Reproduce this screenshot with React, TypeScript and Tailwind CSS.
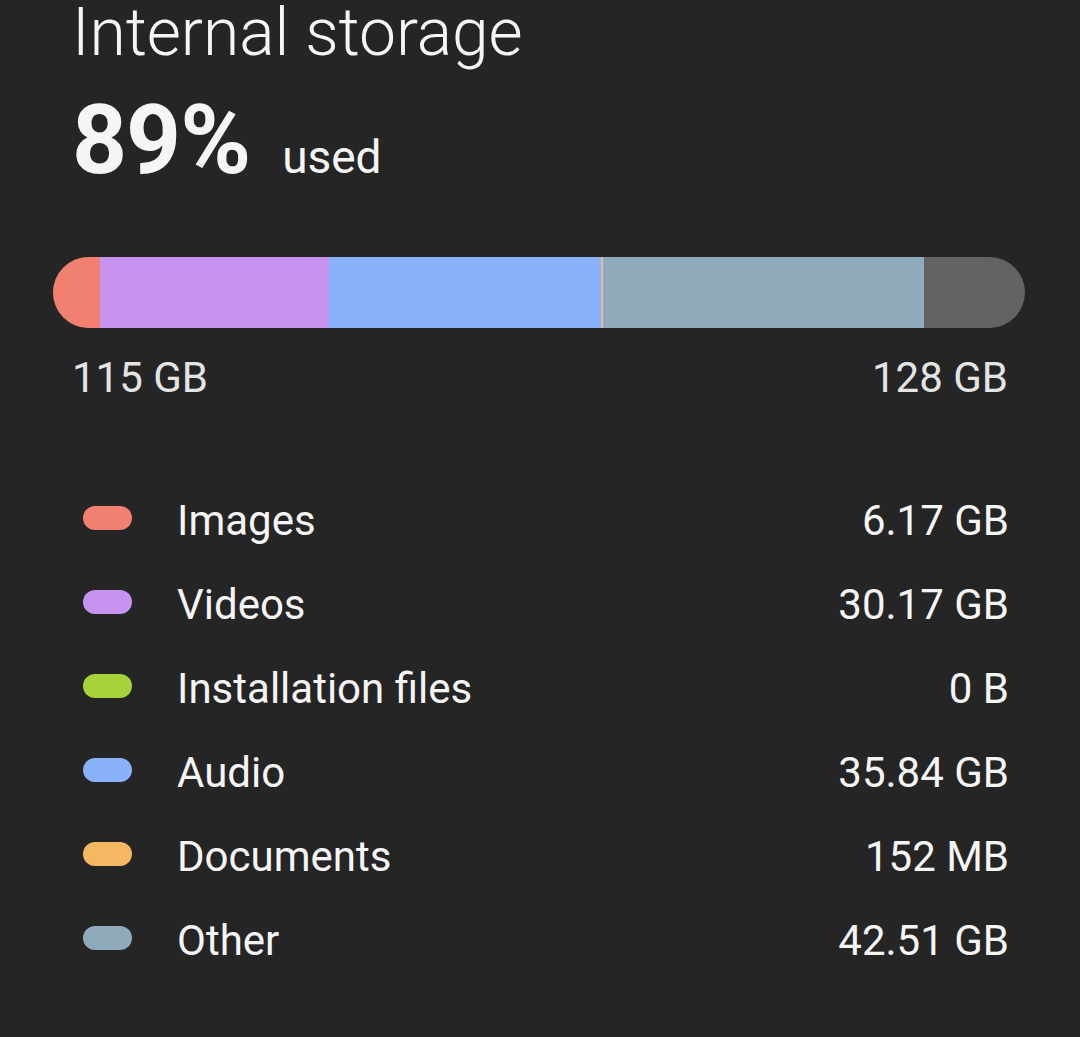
import React from 'react';

interface Segment {
  label: string;
  size: string;
  color: string;
  width: number; // px share of the bar
}

const categories: Segment[] = [
  { label: 'Images', size: '6.17 GB', color: 'bg-[#f28070]', width: 47 },
  { label: 'Videos', size: '30.17 GB', color: 'bg-[#c694f0]', width: 229 },
  { label: 'Installation files', size: '0 B', color: 'bg-[#a6d23a]', width: 0 },
  { label: 'Audio', size: '35.84 GB', color: 'bg-[#8ab2fa]', width: 272 },
  { label: 'Documents', size: '152 MB', color: 'bg-[#f5b862]', width: 1 },
  { label: 'Other', size: '42.51 GB', color: 'bg-[#8faabb]', width: 322 },
];

export default function App() {
  return (
    <div className="flow-root min-h-screen bg-[#252525] text-[#f5f5f5] font-['Roboto','Liberation_Sans',sans-serif]">
      <div className="pl-[53px] pr-[55px]">
        {/* Header */}
        <div className="pl-[19px]">
          <h1 className="pt-[1px] text-[66px] font-light leading-[64px] tracking-[-0.1px]">Internal storage</h1>
          <div className="mt-[27px] flex items-baseline gap-[32px]">
            <span className="text-[96px] font-bold leading-none tracking-[-1px]">89%</span>
            <span className="text-[46px] leading-none">used</span>
          </div>
        </div>

        {/* Usage bar */}
        <div className="mt-[69px] flex h-[71px] overflow-hidden rounded-full bg-[#636363]">
          {categories.map((c) =>
            c.width > 0 ? (
              <div
                key={c.label}
                className={`${c.color} h-full shrink-0 ${c.label === 'Other' ? 'border-l border-[#c9c9c9]' : ''}`}
                style={{ width: c.width }}
              />
            ) : null,
          )}
        </div>

        <div className="mt-[29px] flex justify-between pl-[19px] pr-[17px] text-[42px] leading-none text-[#e4e4e4]">
          <span>115 GB</span>
          <span>128 GB</span>
        </div>

        {/* Legend */}
        <div className="mt-[79px] pl-[30px] pr-[16px]">
          {categories.map((c) => (
            <div key={c.label} className="flex h-[84px] items-center text-[42px]">
              <span className={`${c.color} h-[24px] w-[49px] rounded-full -mt-[4px]`} />
              <span className="ml-[45px] flex-1">{c.label}</span>
              <span>{c.size}</span>
            </div>
          ))}
        </div>
      </div>
    </div>
  );
}
